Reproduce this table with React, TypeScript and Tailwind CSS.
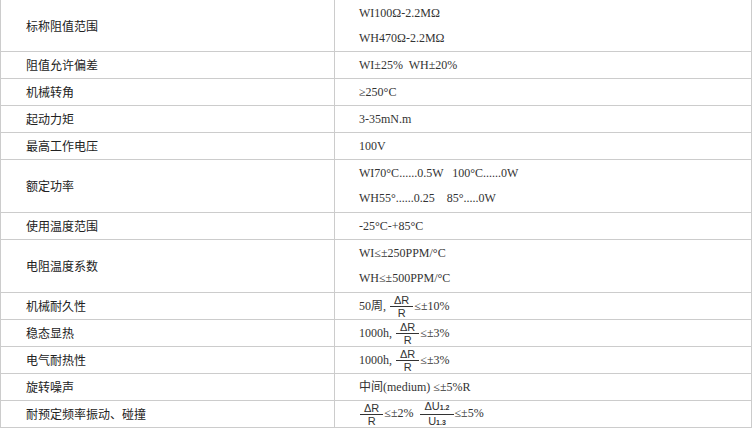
import React from "react";

const serif = { fontFamily: '"Liberation Serif", "Noto Sans CJK SC", serif' };

function Frac({ top, bottom }: { top: React.ReactNode; bottom: React.ReactNode }) {
  return (
    <span
      className="inline-flex flex-col items-center align-middle text-[11px] leading-[10px] mx-px text-[#333]"
      style={{ fontFamily: '"Liberation Sans", Arial, sans-serif' }}
    >
      <span className="border-b border-[#333] px-[4px] pb-[1px]">{top}</span>
      <span className="pt-[1px]">{bottom}</span>
    </span>
  );
}

const rows: { label: string; lines: React.ReactNode[]; tall?: boolean; first?: boolean }[] = [
  { label: "标称阻值范围", lines: ["WI100Ω-2.2MΩ", "WH470Ω-2.2MΩ"], first: true },
  { label: "阻值允许偏差", lines: ["WI±25%  WH±20%"] },
  { label: "机械转角", lines: ["≥250°C"] },
  { label: "起动力矩", lines: ["3-35mN.m"] },
  { label: "最高工作电压", lines: ["100V"] },
  { label: "额定功率", lines: ["WI70°C......0.5W   100°C......0W", "WH55°......0.25    85°.....0W"], tall: true },
  { label: "使用温度范围", lines: ["-25°C-+85°C"] },
  { label: "电阻温度系数", lines: ["WI≤±250PPM/°C", "WH≤±500PPM/°C"], tall: true },
  {
    label: "机械耐久性",
    lines: [
      <>
        50周, <Frac top="ΔR" bottom="R" />≤±10%
      </>,
    ],
  },
  {
    label: "稳态显热",
    lines: [
      <>
        1000h, <Frac top="ΔR" bottom="R" />≤±3%
      </>,
    ],
  },
  {
    label: "电气耐热性",
    lines: [
      <>
        1000h, <Frac top="ΔR" bottom="R" />≤±3%
      </>,
    ],
  },
  { label: "旋转噪声", lines: ["中间(medium) ≤±5%R"] },
  {
    label: "耐预定频率振动、碰撞",
    lines: [
      <>
        <Frac top="ΔR" bottom="R" />≤±2%{"  "}
        <Frac
          top={
            <>
              ΔU<span className="text-[7px] font-bold">1.2</span>
            </>
          }
          bottom={
            <>
              U<span className="text-[7px] font-bold">1.3</span>
            </>
          }
        />
        ≤±5%
      </>,
    ],
  },
];

export default function App() {
  return (
    <div className="w-[752px] h-[428px] overflow-hidden bg-white">
      <div className="-mt-px border border-[#cccccc]">
        {rows.map((r, i) => (
          <div
            key={i}
            className={
              "flex border-b border-[#cccccc] " +
              (r.first ? "h-[52px]" : r.tall ? "h-[53px]" : "h-[27px]")
            }
          >
            <div
              className="w-[334px] shrink-0 border-r border-[#cccccc] flex items-center pl-[25px] text-[12px] text-[#222]"
              style={{ fontFamily: '"Noto Sans CJK SC", sans-serif' }}
            >
              {r.label}
            </div>
            <div
              className="flex-1 flex flex-col justify-center pl-[24px] text-[12px] text-[#333] leading-[25px] whitespace-pre"
              style={serif}
            >
              {r.lines.map((l, j) => (
                <div key={j}>{l}</div>
              ))}
            </div>
          </div>
        ))}
      </div>
    </div>
  );
}
